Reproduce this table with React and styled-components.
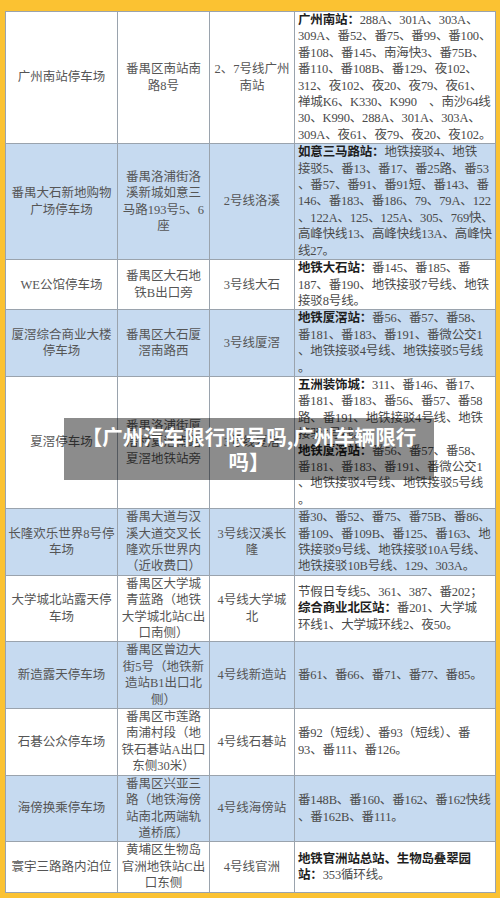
import React from 'react';
import styled, { createGlobalStyle } from 'styled-components';

const rows = [
  {
    name: '广州南站停车场',
    addr: '番禺区南站南\n路8号',
    metro: '2、7号线广州\n南站',
    bus: [
      [['广州南站：', true], ['288A、301A、303A、']],
      [['309A、番52、番75、番99、番100、']],
      [['番108、番145、南海快3、番75B、']],
      [['番110、番108B、番129、夜102、']],
      [['312、夜102、夜20、夜79、夜61、']],
      [['禅城K6、K330、K990　、南沙64线']],
      [['30、K990、288A、301A、303A、']],
      [['309A、夜61、夜79、夜20、夜102。']],
    ],
  },
  {
    blue: true,
    name: '番禺大石新地购物\n广场停车场',
    addr: '番禺洛浦街洛\n溪新城如意三\n马路193号5、6\n座',
    metro: '2号线洛溪',
    bus: [
      [['如意三马路站：', true], ['地铁接驳4、地铁']],
      [['接驳5、番13、番17、番25路、番53']],
      [['、番57、番91、番91短、番143、番']],
      [['146、番183、番186、79、79A、122']],
      [['、122A、125、125A、305、769快、']],
      [['高峰快线13、高峰快线13A、高峰快']],
      [['线27。']],
    ],
  },
  {
    name: 'WE公馆停车场',
    addr: '番禺区大石地\n铁B出口旁',
    metro: '3号线大石',
    bus: [
      [['地铁大石站：', true], ['番145、番185、番']],
      [['187、番190、地铁接驳7号线、地铁']],
      [['接驳8号线。']],
    ],
  },
  {
    blue: true,
    name: '厦滘综合商业大楼\n停车场',
    addr: '番禺区大石厦\n滘南路西',
    metro: '3号线厦滘',
    bus: [
      [['地铁厦滘站：', true], ['番56、番57、番58、']],
      [['番181、番183、番191、番微公交1']],
      [['、地铁接驳4号线、地铁接驳5号线']],
      [['。']],
    ],
  },
  {
    name: '夏滘停车场',
    addr: '番禺洛浦街厦\n滘村夏滘南路\n夏滘地铁站旁',
    metro: '3号线夏滘',
    bus: [
      [['五洲装饰城：', true], ['311、番146、番17、']],
      [['番181、番183、番56、番57、番58']],
      [['路、番191、地铁接驳4号线、地铁']],
      [['接驳5号线。']],
      [['地铁厦滘站：', true], ['番56、番57、番58、']],
      [['番181、番183、番191、番微公交1']],
      [['、地铁接驳4号线、地铁接驳5号线']],
      [['。']],
    ],
  },
  {
    blue: true,
    name: '长隆欢乐世界8号停\n车场',
    addr: '番禺大道与汉\n溪大道交叉长\n隆欢乐世界内\n（近收费口）',
    metro: '3号线汉溪长\n隆',
    bus: [
      [['番30、番52、番75、番75B、番86、']],
      [['番109、番109B、番125、番163、地']],
      [['铁接驳9号线、地铁接驳10A号线、']],
      [['地铁接驳10B号线、129、303A。']],
    ],
  },
  {
    name: '大学城北站露天停\n车场',
    addr: '番禺区大学城\n青蓝路（地铁\n大学城北站C出\n口南侧）',
    metro: '4号线大学城\n北',
    bus: [
      [['节假日专线5、361、387、番202；']],
      [['综合商业北区站：', true], ['番201、大学城']],
      [['环线1、大学城环线2、夜50。']],
    ],
  },
  {
    blue: true,
    name: '新造露天停车场',
    addr: '番禺区曾边大\n街5号（地铁新\n造站B1出口北\n侧）',
    metro: '4号线新造站',
    bus: [[['番61、番66、番71、番77、番85。']]],
  },
  {
    name: '石碁公众停车场',
    addr: '番禺区市莲路\n南浦村段（地\n铁石碁站A出口\n东侧30米）',
    metro: '4号线石碁站',
    bus: [
      [['番92（短线）、番93（短线）、番']],
      [['93、番111、番126。']],
    ],
  },
  {
    blue: true,
    name: '海傍换乘停车场',
    addr: '番禺区兴亚三\n路（地铁海傍\n站南北两端轨\n道桥底）',
    metro: '4号线海傍站',
    bus: [
      [['番148B、番160、番162、番162快线']],
      [['、番162B、番111。']],
    ],
  },
  {
    name: '寰宇三路路内泊位',
    addr: '黄埔区生物岛\n官洲地铁站C出\n口东侧',
    metro: '4号线官洲',
    bus: [
      [['地铁官洲站总站、生物岛叠翠园', true]],
      [['站：', true], ['353循环线。']],
    ],
  },
];

const App = () => (
  <Page>
    <GlobalStyle />
    <Sheet>
      <colgroup>
        <col width="112" />
        <col width="92" />
        <col width="85" />
        <col width="201" />
      </colgroup>
      <tbody>
        {rows.map((row) => (
          <Row key={row.name} $blue={row.blue}>
            <Cell>{row.name}</Cell>
            <Cell>{row.addr}</Cell>
            <Cell>{row.metro}</Cell>
            <BusCell>
              {row.bus.map((line, i) => (
                <Line key={i}>
                  {line.map(([text, bold], j) =>
                    bold ? <Stop key={j}>{text}</Stop> : <span key={j}>{text}</span>
                  )}
                </Line>
              ))}
            </BusCell>
          </Row>
        ))}
      </tbody>
    </Sheet>
    <Caption>【广州汽车限行限号吗,广州车辆限行吗】</Caption>
  </Page>
);

const GlobalStyle = createGlobalStyle`
  html, body {
    margin: 0;
    padding: 0;
    background: #fbc232;
  }
`;

const Page = styled.div`
  position: relative;
  width: 500px;
  height: 898px;
  padding: 11px 5px 0;
  box-sizing: border-box;
  background: #fbc232;
  font-family: "Liberation Serif", "Noto Sans CJK SC", serif;
`;

const Sheet = styled.table`
  width: 490px;
  table-layout: fixed;
  border-collapse: collapse;
  background: #fff;
  border: 1px solid #9aa3ad;
`;

const Row = styled.tr`
  background: ${(p) => (p.$blue ? '#c6daf0' : '#ffffff')};
`;

const Cell = styled.td`
  border: 1px solid #9aa3ad;
  padding: 0 2px;
  text-align: center;
  vertical-align: middle;
  white-space: pre;
  font-size: 12.5px;
  line-height: 16.4px;
  color: #555;
`;

const BusCell = styled.td`
  border: 1px solid #9aa3ad;
  padding: 0 1px 0 3px;
  vertical-align: middle;
  font-size: 12.5px;
  line-height: 16.4px;
  letter-spacing: -0.15px;
  color: #4a4a4a;
  overflow: hidden;
`;

const Line = styled.div`
  white-space: pre;
`;

const Stop = styled.span`
  font-weight: bold;
  color: #1e1e1e;
`;

const Caption = styled.div`
  position: absolute;
  left: 64px;
  top: 418px;
  width: 370px;
  height: 62px;
  box-sizing: border-box;
  padding: 6px 14px;
  background: rgba(0, 0, 0, 0.45);
  color: #fff;
  font-family: "Noto Sans CJK SC", sans-serif;
  font-weight: bold;
  font-size: 20.5px;
  line-height: 25px;
  text-align: center;
`;

export default App;
